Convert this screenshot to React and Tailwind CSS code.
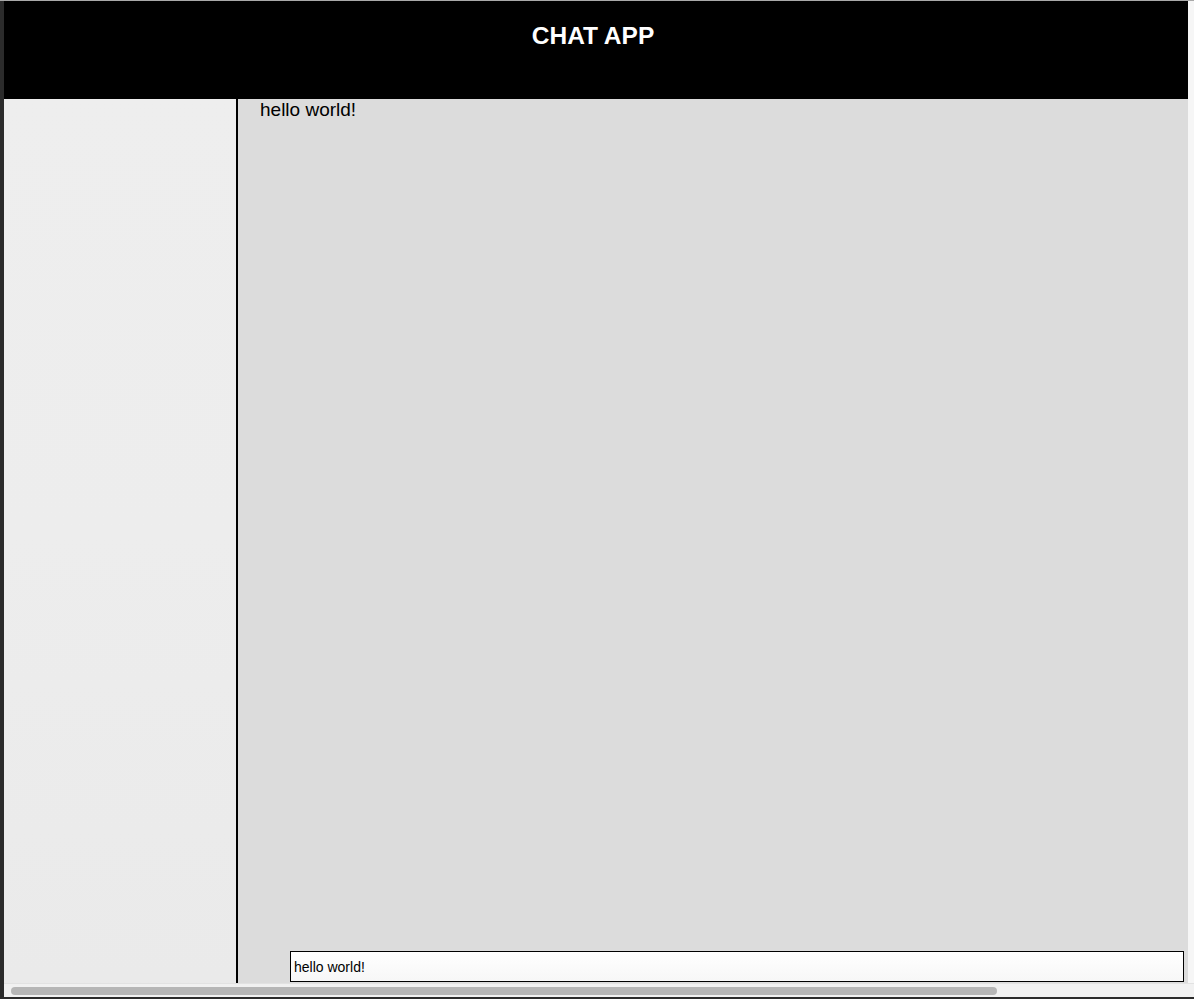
import React from 'react';

export default function App() {
    return (
        <div className="w-[1194px] h-[999px] bg-[#2b2b2b] border-t border-[#a9a9a9] pl-1 pb-[2px] flex flex-col overflow-hidden font-['Liberation_Sans',Arial,sans-serif] text-black">
            {/* Header */}
            <header className="h-[98px] shrink-0 bg-black flex">
                <div className="w-[1184px] bg-black pr-[6px]">
                    <h1 className="text-center text-white font-bold text-[24.5px] leading-[24px] pt-[23px]">CHAT APP</h1>
                </div>
                <div className="flex-1 bg-[#f6f6f6]" />
            </header>

            {/* Body */}
            <div className="flex-1 flex min-h-0">
                <aside className="w-[234px] shrink-0 bg-gradient-to-b from-[#eeeeee] via-[#ededed] to-[#eaeaea] border-r-2 border-black" />
                <main className="flex-1 bg-[#dcdcdc] flex flex-col">
                    <p className="pl-[22px] text-[19px] leading-[22px]">hello world!</p>
                    <div className="flex-1" />
                    <input
                        readOnly
                        value="hello world!"
                        className="ml-[52px] mr-1 mb-px h-[31px] border border-black bg-gradient-to-b from-white to-[#f7f7f7] px-[3px] text-[14px] text-black outline-none font-['Liberation_Sans',Arial,sans-serif]"
                    />
                </main>
                <div className="w-[6px] shrink-0 bg-[#f6f6f6]" />
            </div>

            {/* Horizontal scrollbar */}
            <div className="h-[14px] shrink-0 bg-[#f1f1f1] border-t border-[#e2e2e2] flex items-center pl-[7px]">
                <div className="w-[986px] h-[8px] rounded-full bg-[#b6b6b6]" />
            </div>
        </div>
    );
}
